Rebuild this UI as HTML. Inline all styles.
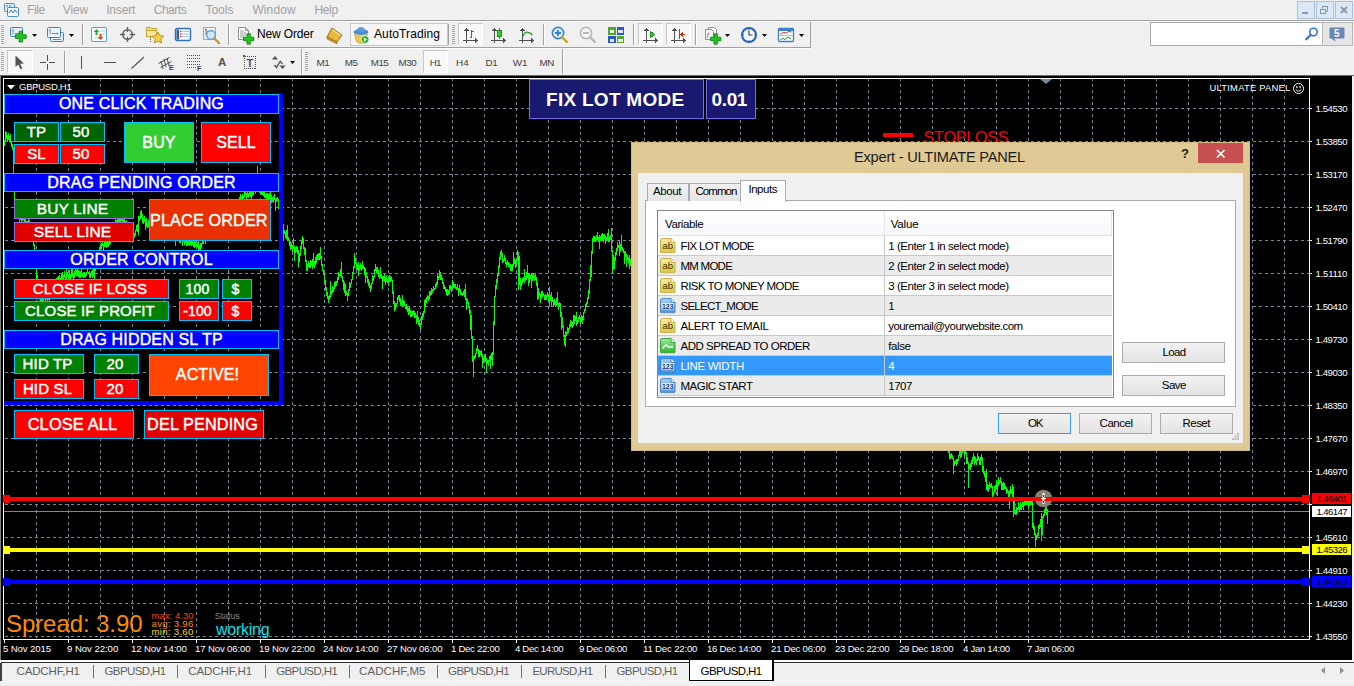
<!DOCTYPE html>
<html><head><meta charset="utf-8"><title>MT4</title>
<style>
html,body{margin:0;padding:0;}
body{width:1354px;height:686px;overflow:hidden;background:#f0f0f0;font-family:"Liberation Sans",sans-serif;position:relative;}
.a{position:absolute;box-sizing:content-box;white-space:nowrap;overflow:hidden;}
.t{overflow:visible;line-height:1;}
svg{position:absolute;left:0;top:0;overflow:visible;}
</style></head><body>

<div class="a" style="left:0;top:75px;width:1354px;height:585px;background:#000;"></div>
<div class="a" style="left:0;top:75px;width:1354px;height:1px;background:#696969;"></div>
<div class="a" style="left:0;top:76px;width:1px;height:584px;background:#808080;"></div>
<svg width="1354" height="686" viewBox="0 0 1354 686" shape-rendering="crispEdges">
<line x1="36.5" y1="78" x2="36.5" y2="638" stroke="#778899" stroke-width="1" stroke-dasharray="3 3"/>
<line x1="68.5" y1="78" x2="68.5" y2="638" stroke="#778899" stroke-width="1" stroke-dasharray="3 3"/>
<line x1="100.5" y1="78" x2="100.5" y2="638" stroke="#778899" stroke-width="1" stroke-dasharray="3 3"/>
<line x1="132.5" y1="78" x2="132.5" y2="638" stroke="#778899" stroke-width="1" stroke-dasharray="3 3"/>
<line x1="164.5" y1="78" x2="164.5" y2="638" stroke="#778899" stroke-width="1" stroke-dasharray="3 3"/>
<line x1="196.5" y1="78" x2="196.5" y2="638" stroke="#778899" stroke-width="1" stroke-dasharray="3 3"/>
<line x1="228.5" y1="78" x2="228.5" y2="638" stroke="#778899" stroke-width="1" stroke-dasharray="3 3"/>
<line x1="260.5" y1="78" x2="260.5" y2="638" stroke="#778899" stroke-width="1" stroke-dasharray="3 3"/>
<line x1="292.5" y1="78" x2="292.5" y2="638" stroke="#778899" stroke-width="1" stroke-dasharray="3 3"/>
<line x1="324.5" y1="78" x2="324.5" y2="638" stroke="#778899" stroke-width="1" stroke-dasharray="3 3"/>
<line x1="356.5" y1="78" x2="356.5" y2="638" stroke="#778899" stroke-width="1" stroke-dasharray="3 3"/>
<line x1="388.5" y1="78" x2="388.5" y2="638" stroke="#778899" stroke-width="1" stroke-dasharray="3 3"/>
<line x1="420.5" y1="78" x2="420.5" y2="638" stroke="#778899" stroke-width="1" stroke-dasharray="3 3"/>
<line x1="452.5" y1="78" x2="452.5" y2="638" stroke="#778899" stroke-width="1" stroke-dasharray="3 3"/>
<line x1="484.5" y1="78" x2="484.5" y2="638" stroke="#778899" stroke-width="1" stroke-dasharray="3 3"/>
<line x1="516.5" y1="78" x2="516.5" y2="638" stroke="#778899" stroke-width="1" stroke-dasharray="3 3"/>
<line x1="548.5" y1="78" x2="548.5" y2="638" stroke="#778899" stroke-width="1" stroke-dasharray="3 3"/>
<line x1="580.5" y1="78" x2="580.5" y2="638" stroke="#778899" stroke-width="1" stroke-dasharray="3 3"/>
<line x1="612.5" y1="78" x2="612.5" y2="638" stroke="#778899" stroke-width="1" stroke-dasharray="3 3"/>
<line x1="644.5" y1="78" x2="644.5" y2="638" stroke="#778899" stroke-width="1" stroke-dasharray="3 3"/>
<line x1="676.5" y1="78" x2="676.5" y2="638" stroke="#778899" stroke-width="1" stroke-dasharray="3 3"/>
<line x1="708.5" y1="78" x2="708.5" y2="638" stroke="#778899" stroke-width="1" stroke-dasharray="3 3"/>
<line x1="740.5" y1="78" x2="740.5" y2="638" stroke="#778899" stroke-width="1" stroke-dasharray="3 3"/>
<line x1="772.5" y1="78" x2="772.5" y2="638" stroke="#778899" stroke-width="1" stroke-dasharray="3 3"/>
<line x1="804.5" y1="78" x2="804.5" y2="638" stroke="#778899" stroke-width="1" stroke-dasharray="3 3"/>
<line x1="836.5" y1="78" x2="836.5" y2="638" stroke="#778899" stroke-width="1" stroke-dasharray="3 3"/>
<line x1="868.5" y1="78" x2="868.5" y2="638" stroke="#778899" stroke-width="1" stroke-dasharray="3 3"/>
<line x1="900.5" y1="78" x2="900.5" y2="638" stroke="#778899" stroke-width="1" stroke-dasharray="3 3"/>
<line x1="932.5" y1="78" x2="932.5" y2="638" stroke="#778899" stroke-width="1" stroke-dasharray="3 3"/>
<line x1="964.5" y1="78" x2="964.5" y2="638" stroke="#778899" stroke-width="1" stroke-dasharray="3 3"/>
<line x1="996.5" y1="78" x2="996.5" y2="638" stroke="#778899" stroke-width="1" stroke-dasharray="3 3"/>
<line x1="1028.5" y1="78" x2="1028.5" y2="638" stroke="#778899" stroke-width="1" stroke-dasharray="3 3"/>
<line x1="1060.5" y1="78" x2="1060.5" y2="638" stroke="#778899" stroke-width="1" stroke-dasharray="3 3"/>
<line x1="1092.5" y1="78" x2="1092.5" y2="638" stroke="#778899" stroke-width="1" stroke-dasharray="3 3"/>
<line x1="1124.5" y1="78" x2="1124.5" y2="638" stroke="#778899" stroke-width="1" stroke-dasharray="3 3"/>
<line x1="1156.5" y1="78" x2="1156.5" y2="638" stroke="#778899" stroke-width="1" stroke-dasharray="3 3"/>
<line x1="1188.5" y1="78" x2="1188.5" y2="638" stroke="#778899" stroke-width="1" stroke-dasharray="3 3"/>
<line x1="1220.5" y1="78" x2="1220.5" y2="638" stroke="#778899" stroke-width="1" stroke-dasharray="3 3"/>
<line x1="1252.5" y1="78" x2="1252.5" y2="638" stroke="#778899" stroke-width="1" stroke-dasharray="3 3"/>
<line x1="1284.5" y1="78" x2="1284.5" y2="638" stroke="#778899" stroke-width="1" stroke-dasharray="3 3"/>
<line x1="5" y1="108.5" x2="1309" y2="108.5" stroke="#778899" stroke-width="1" stroke-dasharray="3 3"/>
<line x1="5" y1="141.5" x2="1309" y2="141.5" stroke="#778899" stroke-width="1" stroke-dasharray="3 3"/>
<line x1="5" y1="174.5" x2="1309" y2="174.5" stroke="#778899" stroke-width="1" stroke-dasharray="3 3"/>
<line x1="5" y1="207.5" x2="1309" y2="207.5" stroke="#778899" stroke-width="1" stroke-dasharray="3 3"/>
<line x1="5" y1="240.5" x2="1309" y2="240.5" stroke="#778899" stroke-width="1" stroke-dasharray="3 3"/>
<line x1="5" y1="273.5" x2="1309" y2="273.5" stroke="#778899" stroke-width="1" stroke-dasharray="3 3"/>
<line x1="5" y1="306.5" x2="1309" y2="306.5" stroke="#778899" stroke-width="1" stroke-dasharray="3 3"/>
<line x1="5" y1="339.5" x2="1309" y2="339.5" stroke="#778899" stroke-width="1" stroke-dasharray="3 3"/>
<line x1="5" y1="372.5" x2="1309" y2="372.5" stroke="#778899" stroke-width="1" stroke-dasharray="3 3"/>
<line x1="5" y1="405.5" x2="1309" y2="405.5" stroke="#778899" stroke-width="1" stroke-dasharray="3 3"/>
<line x1="5" y1="438.5" x2="1309" y2="438.5" stroke="#778899" stroke-width="1" stroke-dasharray="3 3"/>
<line x1="5" y1="471.5" x2="1309" y2="471.5" stroke="#778899" stroke-width="1" stroke-dasharray="3 3"/>
<line x1="5" y1="504.5" x2="1309" y2="504.5" stroke="#778899" stroke-width="1" stroke-dasharray="3 3"/>
<line x1="5" y1="537.5" x2="1309" y2="537.5" stroke="#778899" stroke-width="1" stroke-dasharray="3 3"/>
<line x1="5" y1="570.5" x2="1309" y2="570.5" stroke="#778899" stroke-width="1" stroke-dasharray="3 3"/>
<line x1="5" y1="603.5" x2="1309" y2="603.5" stroke="#778899" stroke-width="1" stroke-dasharray="3 3"/>
<line x1="5" y1="636.5" x2="1309" y2="636.5" stroke="#778899" stroke-width="1" stroke-dasharray="3 3"/>
<path d="M3.5 639.5V78.5H1309.5V639.5" fill="none" stroke="#fff"/>
<path d="M3.5 639.5H1309.5" fill="none" stroke="#fff"/>
<path d="M4.5 140V146M5.5 131V142M6.5 132V139M7.5 135V142M8.5 133V140M9.5 136V142M10.5 134V143M11.5 142V147M12.5 144V150M13.5 147V176M14.5 174V209M15.5 200V209M16.5 204V210M17.5 206V211M18.5 209V217M19.5 211V224M20.5 213V220M21.5 216V223M22.5 216V221M23.5 217V220M24.5 218V222M25.5 217V225M26.5 221V226M27.5 221V226M28.5 218V223M29.5 220V226M30.5 224V232M31.5 229V237M32.5 235V242M33.5 230V246M34.5 244V254M35.5 253V268M36.5 266V279M37.5 275V286M38.5 282V295M39.5 288V295M40.5 292V306M41.5 296V301M42.5 297V304M43.5 295V303M44.5 293V299M45.5 295V302M46.5 294V300M47.5 295V303M48.5 294V300M49.5 296V304M50.5 294V299M51.5 293V299M52.5 288V295M53.5 287V293M54.5 281V290M55.5 283V288M56.5 278V285M57.5 277V284M58.5 276V282M59.5 275V282M60.5 278V283M61.5 274V280M62.5 272V279M63.5 275V280M64.5 271V278M65.5 276V281M66.5 265V279M67.5 272V277M68.5 274V283M69.5 270V279M70.5 274V280M71.5 264V278M72.5 269V277M73.5 273V281M74.5 271V278M75.5 267V275M76.5 270V276M77.5 264V276M78.5 270V277M79.5 271V278M80.5 271V278M81.5 268V277M82.5 273V277M83.5 272V278M84.5 272V277M85.5 273V278M86.5 272V276M87.5 269V273M88.5 272V274M89.5 271V278M90.5 273V278M91.5 271V276M92.5 270V278M93.5 269V277M94.5 268V280M95.5 263V271M96.5 250V265M97.5 255V262M98.5 252V258M99.5 247V255M100.5 244V252M101.5 243V249M102.5 242V246M103.5 244V250M104.5 239V247M105.5 240V247M106.5 242V248M107.5 239V247M108.5 240V247M109.5 242V245M110.5 240V244M111.5 233V242M112.5 231V238M113.5 230V236M114.5 222V233M115.5 219V224M116.5 220V228M117.5 212V227M118.5 209V225M119.5 218V223M120.5 216V222M121.5 217V221M122.5 214V223M123.5 218V222M124.5 218V226M125.5 221V226M126.5 220V226M127.5 225V231M128.5 224V237M129.5 227V240M130.5 229V238M131.5 229V234M132.5 231V239M133.5 229V235M134.5 233V238M135.5 230V236M136.5 225V231M137.5 224V232M138.5 216V235M139.5 216V221M140.5 211V219M141.5 210V218M142.5 214V223M143.5 218V224M144.5 216V222M145.5 219V230M146.5 218V227M147.5 222V228M148.5 220V227M149.5 224V227M150.5 221V227M151.5 225V230M152.5 228V239M153.5 222V231M154.5 224V232M155.5 228V234M156.5 227V232M157.5 229V234M158.5 230V235M159.5 231V237M160.5 230V235M161.5 232V235M162.5 229V233M163.5 230V237M164.5 230V236M165.5 231V238M166.5 228V234M167.5 232V238M168.5 234V239M169.5 234V240M170.5 231V238M171.5 232V236M172.5 233V240M173.5 232V240M174.5 236V240M175.5 233V246M176.5 237V241M177.5 237V240M178.5 238V241M179.5 236V243M180.5 236V243M181.5 225V240M182.5 238V246M183.5 235V242M184.5 238V245M185.5 237V243M186.5 241V246M187.5 241V246M188.5 239V245M189.5 238V246M190.5 240V245M191.5 240V246M192.5 237V245M193.5 242V247M194.5 235V248M195.5 240V247M196.5 244V247M197.5 242V247M198.5 236V250M199.5 245V251M200.5 243V250M201.5 243V248M202.5 237V244M203.5 240V244M204.5 229V241M205.5 236V244M206.5 231V240M207.5 232V239M208.5 232V238M209.5 230V237M210.5 231V236M211.5 229V240M212.5 224V232M213.5 220V229M214.5 222V226M215.5 220V226M216.5 221V224M217.5 214V226M218.5 218V224M219.5 215V221M220.5 210V222M221.5 215V220M222.5 217V231M223.5 214V219M224.5 211V218M225.5 212V215M226.5 211V217M227.5 211V216M228.5 205V213M229.5 207V215M230.5 206V212M231.5 204V211M232.5 206V212M233.5 201V208M234.5 201V206M235.5 200V205M236.5 201V207M237.5 199V204M238.5 201V213M239.5 197V205M240.5 194V201M241.5 196V199M242.5 194V201M243.5 196V200M244.5 192V198M245.5 184V195M246.5 193V200M247.5 190V197M248.5 193V198M249.5 188V196M250.5 191V197M251.5 188V199M252.5 191V196M253.5 188V195M254.5 188V192M255.5 190V194M256.5 185V192M257.5 166V192M258.5 186V191M259.5 184V193M260.5 187V194M261.5 189V195M262.5 191V195M263.5 190V196M264.5 190V198M265.5 194V198M266.5 193V201M267.5 193V199M268.5 194V201M269.5 193V199M270.5 192V199M271.5 195V203M272.5 197V202M273.5 196V203M274.5 194V200M275.5 198V211M276.5 198V202M277.5 197V201M278.5 199V209M279.5 205V212M280.5 208V220M281.5 216V225M282.5 220V226M283.5 224V241M284.5 230V234M285.5 232V238M286.5 230V239M287.5 225V241M288.5 237V241M289.5 239V246M290.5 241V250M291.5 243V249M292.5 245V252M293.5 238V249M294.5 246V261M295.5 247V253M296.5 246V252M297.5 247V254M298.5 250V267M299.5 253V262M300.5 246V256M301.5 240V249M302.5 236V244M303.5 238V249M304.5 247V255M305.5 248V262M306.5 260V271M307.5 264V271M308.5 261V267M309.5 263V268M310.5 260V268M311.5 261V266M312.5 259V269M313.5 253V267M314.5 261V268M315.5 257V265M316.5 255V263M317.5 254V260M318.5 253V260M319.5 253V260M320.5 247V259M321.5 256V266M322.5 264V271M323.5 270V275M324.5 273V283M325.5 280V290M326.5 287V296M327.5 292V299M328.5 296V303M329.5 295V300M330.5 281V298M331.5 290V295M332.5 286V293M333.5 287V292M334.5 282V289M335.5 281V287M336.5 281V286M337.5 277V283M338.5 272V280M339.5 274V277M340.5 269V276M341.5 262V278M342.5 276V282M343.5 280V290M344.5 282V293M345.5 284V296M346.5 291V295M347.5 293V301M348.5 289V296M349.5 282V291M350.5 283V288M351.5 279V284M352.5 272V280M353.5 266V274M354.5 253V268M355.5 258V264M356.5 262V270M357.5 264V270M358.5 262V276M359.5 265V271M360.5 263V269M361.5 265V271M362.5 261V269M363.5 265V269M364.5 267V275M365.5 268V283M366.5 272V278M367.5 276V283M368.5 279V286M369.5 282V288M370.5 285V292M371.5 283V289M372.5 275V284M373.5 276V281M374.5 269V277M375.5 264V271M376.5 267V273M377.5 267V273M378.5 270V277M379.5 273V279M380.5 267V278M381.5 274V279M382.5 276V289M383.5 276V281M384.5 274V282M385.5 277V285M386.5 275V282M387.5 279V283M388.5 278V286M389.5 275V282M390.5 276V282M391.5 277V281M392.5 280V294M393.5 291V304M394.5 301V311M395.5 303V310M396.5 303V307M397.5 297V304M398.5 295V300M399.5 295V302M400.5 298V306M401.5 300V305M402.5 295V307M403.5 300V306M404.5 301V306M405.5 305V309M406.5 304V310M407.5 306V312M408.5 308V315M409.5 306V314M410.5 310V317M411.5 311V317M412.5 311V316M413.5 310V315M414.5 311V318M415.5 313V318M416.5 315V324M417.5 311V322M418.5 317V325M419.5 320V327M420.5 323V330M421.5 316V325M422.5 313V320M423.5 311V317M424.5 300V313M425.5 299V307M426.5 297V303M427.5 295V300M428.5 296V301M429.5 291V299M430.5 291V296M431.5 288V295M432.5 289V293M433.5 286V291M434.5 288V290M435.5 284V289M436.5 282V287M437.5 274V285M438.5 276V280M439.5 270V278M440.5 272V280M441.5 275V280M442.5 278V284M443.5 282V289M444.5 285V289M445.5 287V292M446.5 289V295M447.5 289V296M448.5 290V295M449.5 285V294M450.5 285V290M451.5 286V292M452.5 280V289M453.5 282V288M454.5 284V288M455.5 284V289M456.5 287V290M457.5 284V290M458.5 288V296M459.5 285V292M460.5 289V295M461.5 292V295M462.5 293V296M463.5 291V295M464.5 289V297M465.5 284V300M466.5 298V310M467.5 299V304M468.5 302V308M469.5 306V314M470.5 310V330M471.5 315V339M472.5 336V362M473.5 356V377M474.5 355V359M475.5 353V358M476.5 348V354M477.5 345V351M478.5 349V357M479.5 350V357M480.5 351V355M481.5 350V357M482.5 354V368M483.5 357V363M484.5 355V360M485.5 354V362M486.5 358V373M487.5 360V364M488.5 360V366M489.5 356V362M490.5 355V369M491.5 353V360M492.5 352V366M493.5 321V355M494.5 296V325M495.5 285V297M496.5 279V289M497.5 273V283M498.5 265V276M499.5 257V268M500.5 251V260M501.5 250V257M502.5 253V263M503.5 259V262M504.5 255V261M505.5 258V264M506.5 262V267M507.5 260V265M508.5 262V267M509.5 263V267M510.5 264V271M511.5 265V271M512.5 264V271M513.5 252V267M514.5 258V264M515.5 260V268M516.5 259V265M517.5 250V261M518.5 252V290M519.5 256V285M520.5 278V290M521.5 281V286M522.5 278V284M523.5 277V282M524.5 269V283M525.5 276V281M526.5 272V280M527.5 265V278M528.5 273V286M529.5 274V283M530.5 275V279M531.5 273V288M532.5 273V281M533.5 273V279M534.5 275V281M535.5 274V280M536.5 277V286M537.5 282V300M538.5 288V299M539.5 292V296M540.5 294V303M541.5 291V299M542.5 291V297M543.5 293V296M544.5 295V300M545.5 294V300M546.5 295V300M547.5 292V297M548.5 294V301M549.5 287V307M550.5 295V301M551.5 292V307M552.5 297V302M553.5 300V306M554.5 299V305M555.5 301V307M556.5 298V306M557.5 292V305M558.5 303V310M559.5 302V306M560.5 303V317M561.5 312V330M562.5 317V328M563.5 325V337M564.5 335V345M565.5 331V347M566.5 332V336M567.5 327V334M568.5 328V333M569.5 324V330M570.5 320V327M571.5 321V327M572.5 322V328M573.5 315V326M574.5 315V324M575.5 316V321M576.5 312V326M577.5 320V324M578.5 317V322M579.5 315V319M580.5 317V324M581.5 315V322M582.5 316V324M583.5 312V320M584.5 309V313M585.5 304V311M586.5 302V307M587.5 297V304M588.5 290V299M589.5 279V294M590.5 265V281M591.5 251V277M592.5 238V254M593.5 236V242M594.5 236V242M595.5 237V242M596.5 235V241M597.5 232V240M598.5 237V242M599.5 235V249M600.5 236V241M601.5 234V240M602.5 233V241M603.5 234V242M604.5 234V239M605.5 236V244M606.5 237V241M607.5 233V240M608.5 229V242M609.5 237V242M610.5 235V240M611.5 228V252M612.5 250V274M613.5 255V270M614.5 257V269M615.5 252V261M616.5 248V255M617.5 242V251M618.5 245V248M619.5 241V256M620.5 244V252M621.5 235V250M622.5 247V251M623.5 249V253M624.5 251V264M625.5 251V257M626.5 254V267M627.5 255V260M628.5 257V263M629.5 255V269M630.5 259V266M631.5 256V263M632.5 260V265M633.5 257V263M634.5 261V268M635.5 255V277M636.5 262V267M637.5 260V266M638.5 257V271M639.5 263V268M640.5 264V269M945.5 440V449M946.5 441V448M947.5 444V451M948.5 447V453M949.5 449V459M950.5 454V459M951.5 453V458M952.5 455V459M953.5 458V474M954.5 461V466M955.5 460V464M956.5 459V466M957.5 459V464M958.5 455V461M959.5 450V456M960.5 441V458M961.5 450V457M962.5 448V453M963.5 447V452M964.5 449V456M965.5 448V454M966.5 452V464M967.5 457V464M968.5 462V488M969.5 464V469M970.5 463V470M971.5 460V467M972.5 457V464M973.5 453V461M974.5 456V465M975.5 457V463M976.5 459V465M977.5 453V461M978.5 456V460M979.5 458V465M980.5 457V465M981.5 454V461M982.5 457V472M983.5 466V474M984.5 471V477M985.5 473V482M986.5 469V490M987.5 484V491M988.5 485V492M989.5 482V489M990.5 484V487M991.5 483V488M992.5 486V498M993.5 492V496M994.5 486V493M995.5 485V492M996.5 480V489M997.5 482V496M998.5 477V486M999.5 480V484M1000.5 477V483M1001.5 481V490M1002.5 483V490M1003.5 482V490M1004.5 483V489M1005.5 486V489M1006.5 487V494M1007.5 489V493M1008.5 491V498M1009.5 490V509M1010.5 486V494M1011.5 489V494M1012.5 484V500M1013.5 487V517M1014.5 500V514M1015.5 510V515M1016.5 507V515M1017.5 508V513M1018.5 502V510M1019.5 506V512M1020.5 502V510M1021.5 504V510M1022.5 499V507M1023.5 502V510M1024.5 497V506M1025.5 497V504M1026.5 500V505M1027.5 499V504M1028.5 498V509M1029.5 500V506M1030.5 500V505M1031.5 500V505M1032.5 497V528M1033.5 523V530M1034.5 526V535M1035.5 533V547M1036.5 535V540M1037.5 533V538M1038.5 525V536M1039.5 524V529M1040.5 519V527M1041.5 513V541M1042.5 516V535M1043.5 514V518M1044.5 509V516M1045.5 502V513M1046.5 506V515M1047.5 509V524" stroke="#00ff00" stroke-width="1" fill="none"/>
<line x1="4" y1="511.5" x2="1309" y2="511.5" stroke="#778899"/>
<circle cx="1043.5" cy="498.5" r="8.8" fill="#8a8070" shape-rendering="auto"/>
</svg>
<div class="a" style="left:4px;top:497px;width:1306px;height:4px;background:#ff0000;"></div>
<div class="a" style="left:3px;top:495px;width:7px;height:8px;background:#ff0000;"></div>
<div class="a" style="left:1302px;top:495px;width:8px;height:8px;background:#ff0000;"></div>
<div class="a" style="left:4px;top:548px;width:1306px;height:4px;background:#ffff00;"></div>
<div class="a" style="left:3px;top:546px;width:7px;height:8px;background:#ffff00;"></div>
<div class="a" style="left:1302px;top:546px;width:8px;height:8px;background:#ffff00;"></div>
<div class="a" style="left:4px;top:580px;width:1306px;height:4px;background:#0000ff;"></div>
<div class="a" style="left:3px;top:578px;width:7px;height:8px;background:#0000ff;"></div>
<div class="a" style="left:1302px;top:578px;width:8px;height:8px;background:#0000ff;"></div>
<div class="a" style="left:1310px;top:108px;width:2px;height:1px;background:#fff;"></div>
<div class="a t" style="left:1315.6px;top:103.5px;font-size:9.6px;color:#fff;letter-spacing:-0.458px;">1.54530</div>
<div class="a" style="left:1310px;top:141px;width:2px;height:1px;background:#fff;"></div>
<div class="a t" style="left:1315.6px;top:136.5px;font-size:9.6px;color:#fff;letter-spacing:-0.458px;">1.53850</div>
<div class="a" style="left:1310px;top:174px;width:2px;height:1px;background:#fff;"></div>
<div class="a t" style="left:1315.6px;top:169.5px;font-size:9.6px;color:#fff;letter-spacing:-0.458px;">1.53170</div>
<div class="a" style="left:1310px;top:207px;width:2px;height:1px;background:#fff;"></div>
<div class="a t" style="left:1315.6px;top:202.5px;font-size:9.6px;color:#fff;letter-spacing:-0.458px;">1.52470</div>
<div class="a" style="left:1310px;top:240px;width:2px;height:1px;background:#fff;"></div>
<div class="a t" style="left:1315.6px;top:235.5px;font-size:9.6px;color:#fff;letter-spacing:-0.458px;">1.51790</div>
<div class="a" style="left:1310px;top:273px;width:2px;height:1px;background:#fff;"></div>
<div class="a t" style="left:1315.6px;top:268.5px;font-size:9.6px;color:#fff;letter-spacing:-0.254px;">1.51110</div>
<div class="a" style="left:1310px;top:306px;width:2px;height:1px;background:#fff;"></div>
<div class="a t" style="left:1315.6px;top:301.5px;font-size:9.6px;color:#fff;letter-spacing:-0.458px;">1.50410</div>
<div class="a" style="left:1310px;top:339px;width:2px;height:1px;background:#fff;"></div>
<div class="a t" style="left:1315.6px;top:334.5px;font-size:9.6px;color:#fff;letter-spacing:-0.458px;">1.49730</div>
<div class="a" style="left:1310px;top:372px;width:2px;height:1px;background:#fff;"></div>
<div class="a t" style="left:1315.6px;top:367.5px;font-size:9.6px;color:#fff;letter-spacing:-0.458px;">1.49030</div>
<div class="a" style="left:1310px;top:405px;width:2px;height:1px;background:#fff;"></div>
<div class="a t" style="left:1315.6px;top:400.5px;font-size:9.6px;color:#fff;letter-spacing:-0.458px;">1.48350</div>
<div class="a" style="left:1310px;top:438px;width:2px;height:1px;background:#fff;"></div>
<div class="a t" style="left:1315.6px;top:433.5px;font-size:9.6px;color:#fff;letter-spacing:-0.458px;">1.47670</div>
<div class="a" style="left:1310px;top:471px;width:2px;height:1px;background:#fff;"></div>
<div class="a t" style="left:1315.6px;top:466.5px;font-size:9.6px;color:#fff;letter-spacing:-0.458px;">1.46970</div>
<div class="a" style="left:1310px;top:504px;width:2px;height:1px;background:#fff;"></div>
<div class="a" style="left:1310px;top:537px;width:2px;height:1px;background:#fff;"></div>
<div class="a t" style="left:1315.6px;top:532.5px;font-size:9.6px;color:#fff;letter-spacing:-0.458px;">1.45610</div>
<div class="a" style="left:1310px;top:570px;width:2px;height:1px;background:#fff;"></div>
<div class="a t" style="left:1315.6px;top:565.5px;font-size:9.6px;color:#fff;letter-spacing:-0.458px;">1.44910</div>
<div class="a" style="left:1310px;top:603px;width:2px;height:1px;background:#fff;"></div>
<div class="a t" style="left:1315.6px;top:598.5px;font-size:9.6px;color:#fff;letter-spacing:-0.458px;">1.44230</div>
<div class="a" style="left:1310px;top:636px;width:2px;height:1px;background:#fff;"></div>
<div class="a t" style="left:1315.6px;top:631.5px;font-size:9.6px;color:#fff;letter-spacing:-0.458px;">1.43550</div>
<div class="a" style="left:1312px;top:493px;width:39px;height:11px;background:#ff0000;"></div>
<div class="a t" style="left:1316.4px;top:494px;font-size:9.6px;color:#000;letter-spacing:-0.600px;">1.46401</div>
<div class="a" style="left:1312px;top:506px;width:39px;height:11px;background:#ffffff;"></div>
<div class="a t" style="left:1316.4px;top:507px;font-size:9.6px;color:#000;letter-spacing:-0.600px;">1.46147</div>
<div class="a" style="left:1312px;top:544px;width:39px;height:11px;background:#ffff00;"></div>
<div class="a t" style="left:1316.4px;top:545px;font-size:9.6px;color:#000;letter-spacing:-0.600px;">1.45326</div>
<div class="a" style="left:1312px;top:576px;width:39px;height:11px;background:#0000ff;"></div>
<div class="a t" style="left:1316.4px;top:577px;font-size:9.6px;color:#000;letter-spacing:-0.600px;">1.44663</div>
<div class="a" style="left:4px;top:640px;width:1px;height:3px;background:#fff;"></div>
<div class="a t" style="left:3px;top:644px;font-size:9.6px;color:#fff;letter-spacing:-0.110px;">5 Nov 2015</div>
<div class="a" style="left:68px;top:640px;width:1px;height:3px;background:#fff;"></div>
<div class="a t" style="left:67px;top:644px;font-size:9.6px;color:#fff;letter-spacing:-0.052px;">9 Nov 22:00</div>
<div class="a" style="left:132px;top:640px;width:1px;height:3px;background:#fff;"></div>
<div class="a t" style="left:131px;top:644px;font-size:9.6px;color:#fff;letter-spacing:-0.117px;">12 Nov 14:00</div>
<div class="a" style="left:196px;top:640px;width:1px;height:3px;background:#fff;"></div>
<div class="a t" style="left:195px;top:644px;font-size:9.6px;color:#fff;letter-spacing:-0.142px;">17 Nov 06:00</div>
<div class="a" style="left:260px;top:640px;width:1px;height:3px;background:#fff;"></div>
<div class="a t" style="left:259px;top:644px;font-size:9.6px;color:#fff;letter-spacing:-0.117px;">19 Nov 22:00</div>
<div class="a" style="left:324px;top:640px;width:1px;height:3px;background:#fff;"></div>
<div class="a t" style="left:323px;top:644px;font-size:9.6px;color:#fff;letter-spacing:-0.142px;">24 Nov 14:00</div>
<div class="a" style="left:388px;top:640px;width:1px;height:3px;background:#fff;"></div>
<div class="a t" style="left:387px;top:644px;font-size:9.6px;color:#fff;letter-spacing:-0.142px;">27 Nov 06:00</div>
<div class="a" style="left:452px;top:640px;width:1px;height:3px;background:#fff;"></div>
<div class="a t" style="left:451px;top:644px;font-size:9.6px;color:#fff;letter-spacing:-0.288px;">1 Dec 22:00</div>
<div class="a" style="left:516px;top:640px;width:1px;height:3px;background:#fff;"></div>
<div class="a t" style="left:515px;top:644px;font-size:9.6px;color:#fff;letter-spacing:-0.315px;">4 Dec 14:00</div>
<div class="a" style="left:580px;top:640px;width:1px;height:3px;background:#fff;"></div>
<div class="a t" style="left:579px;top:644px;font-size:9.6px;color:#fff;letter-spacing:-0.343px;">9 Dec 06:00</div>
<div class="a" style="left:644px;top:640px;width:1px;height:3px;background:#fff;"></div>
<div class="a t" style="left:643px;top:644px;font-size:9.6px;color:#fff;letter-spacing:-0.175px;">11 Dec 22:00</div>
<div class="a" style="left:708px;top:640px;width:1px;height:3px;background:#fff;"></div>
<div class="a t" style="left:707px;top:644px;font-size:9.6px;color:#fff;letter-spacing:-0.259px;">16 Dec 14:00</div>
<div class="a" style="left:772px;top:640px;width:1px;height:3px;background:#fff;"></div>
<div class="a t" style="left:771px;top:644px;font-size:9.6px;color:#fff;letter-spacing:-0.209px;">21 Dec 06:00</div>
<div class="a" style="left:836px;top:640px;width:1px;height:3px;background:#fff;"></div>
<div class="a t" style="left:835px;top:644px;font-size:9.6px;color:#fff;letter-spacing:-0.234px;">23 Dec 22:00</div>
<div class="a" style="left:900px;top:640px;width:1px;height:3px;background:#fff;"></div>
<div class="a t" style="left:899px;top:644px;font-size:9.6px;color:#fff;letter-spacing:-0.234px;">29 Dec 18:00</div>
<div class="a" style="left:964px;top:640px;width:1px;height:3px;background:#fff;"></div>
<div class="a t" style="left:963px;top:644px;font-size:9.6px;color:#fff;letter-spacing:-0.298px;">4 Jan 14:00</div>
<div class="a" style="left:1028px;top:640px;width:1px;height:3px;background:#fff;"></div>
<div class="a t" style="left:1027px;top:644px;font-size:9.6px;color:#fff;letter-spacing:-0.271px;">7 Jan 06:00</div>
<svg width="20" height="10" style="left:7px;top:85px"><path d="M0 0H8L4 4.500Z" fill="#fff"/></svg>
<div class="a t" style="left:19px;top:82.2px;font-size:9.6px;color:#fff;letter-spacing:-0.331px;">GBPUSD,H1</div>
<div class="a t" style="left:1209.6px;top:82.8px;font-size:9.4px;color:#fff;letter-spacing:0.227px;">ULTIMATE PANEL</div>
<svg width="13" height="13" style="left:1292px;top:82px" shape-rendering="auto"><circle cx="6.500" cy="6.500" r="5" fill="none" stroke="#fff"/><rect x="4.300" y="4" width="1.200" height="2.200" fill="#fff"/><rect x="7.500" y="4" width="1.200" height="2.200" fill="#fff"/><path d="M3.800 7.500Q6.500 10.800 9.200 7.500" stroke="#fff" fill="none"/></svg>
<svg width="14" height="8" style="left:1040px;top:79px"><path d="M0 0H12L6 5Z" fill="#778899"/></svg>
<div class="a" style="left:883px;top:133px;width:30px;height:4px;background:#ff0000;"></div>
<div class="a t" style="left:923.6px;top:130px;font-size:16px;color:#ff0000;letter-spacing:-0.158px;">STOPLOSS</div>
<div class="a t" style="left:6px;top:612px;font-size:24px;color:#ff8c00;letter-spacing:-0.078px;">Spread: 3.90</div>
<div class="a t" style="left:151.6px;top:611px;font-size:9.6px;color:#ff4500;letter-spacing:-0.017px;">max: 4.30</div>
<div class="a t" style="left:151.6px;top:619px;font-size:9.6px;color:#ff8c00;letter-spacing:0.278px;">avg: 3.96</div>
<div class="a t" style="left:151.6px;top:627px;font-size:9.6px;color:#ffd700;letter-spacing:0.279px;">min: 3.60</div>
<div class="a t" style="left:214.8px;top:611.6px;font-size:9.2px;color:#808080;letter-spacing:-0.180px;">Status</div>
<div class="a t" style="left:215.9px;top:622px;font-size:16px;color:#00e5ee;letter-spacing:-0.234px;">working</div>
<svg width="8" height="14" style="left:1040px;top:492px"><path d="M3.500 1v11" stroke="#fff" stroke-width="2"/><path d="M3.500 3v2M3.500 9v2" stroke="#2020ff" stroke-width="1"/><path d="M1 6.500h5" stroke="#fff"/></svg>
<div class="a" style="left:1352px;top:76px;width:2px;height:584px;background:#f0f0f0;"></div>
<div class="a" style="left:279px;top:93px;width:4px;height:312px;background:#0000ff;"></div>
<div class="a" style="left:4px;top:401px;width:279px;height:4px;background:#0000ff;"></div>
<div class="a" style="left:4px;top:94px;width:273px;height:18px;background:#0000ff;border:1px solid #00bfff;font-size:16px;line-height:18px;color:#fff;text-align:center;-webkit-text-stroke:0.45px #fff;letter-spacing:0.15px;">ONE CLICK TRADING</div>
<div class="a" style="left:4px;top:173px;width:273px;height:17px;background:#0000ff;border:1px solid #00bfff;font-size:16px;line-height:17px;color:#fff;text-align:center;-webkit-text-stroke:0.45px #fff;letter-spacing:0.15px;">DRAG PENDING ORDER</div>
<div class="a" style="left:4px;top:250px;width:273px;height:17px;background:#0000ff;border:1px solid #00bfff;font-size:16px;line-height:17px;color:#fff;text-align:center;-webkit-text-stroke:0.45px #fff;letter-spacing:0.15px;">ORDER CONTROL</div>
<div class="a" style="left:4px;top:330px;width:273px;height:17px;background:#0000ff;border:1px solid #00bfff;font-size:16px;line-height:17px;color:#fff;text-align:center;-webkit-text-stroke:0.45px #fff;letter-spacing:0.15px;">DRAG HIDDEN SL TP</div>
<div class="a" style="left:14px;top:122px;width:43px;height:18px;background:#006400;border:1px solid #00bfff;font-size:15px;line-height:18px;color:#fff;text-align:center;-webkit-text-stroke:0.45px #fff;letter-spacing:0.15px;">TP</div>
<div class="a" style="left:60px;top:122px;width:43px;height:18px;background:#006400;border:1px solid #00bfff;font-size:15px;line-height:18px;color:#fff;text-align:center;-webkit-text-stroke:0.45px #fff;letter-spacing:0.15px;padding-right:3px;width:40px;">50</div>
<div class="a" style="left:14px;top:144px;width:43px;height:18px;background:#ff0000;border:1px solid #00bfff;font-size:15px;line-height:18px;color:#fff;text-align:center;-webkit-text-stroke:0.45px #fff;letter-spacing:0.15px;">SL</div>
<div class="a" style="left:60px;top:144px;width:43px;height:18px;background:#ff0000;border:1px solid #00bfff;font-size:15px;line-height:18px;color:#fff;text-align:center;-webkit-text-stroke:0.45px #fff;letter-spacing:0.15px;padding-right:3px;width:40px;">50</div>
<div class="a" style="left:124px;top:122px;width:68px;height:39px;background:#32cd32;border:1px solid #00bfff;font-size:16px;line-height:39px;color:#fff;text-align:center;-webkit-text-stroke:0.45px #fff;letter-spacing:0.15px;">BUY</div>
<div class="a" style="left:201px;top:122px;width:68px;height:39px;background:#ff0000;border:1px solid #00bfff;font-size:16px;line-height:39px;color:#fff;text-align:center;-webkit-text-stroke:0.45px #fff;letter-spacing:0.15px;">SELL</div>
<div class="a" style="left:14px;top:199px;width:118px;height:18px;background:#008000;border:1px solid #9370db;font-size:15.5px;line-height:18px;color:#fff;text-align:center;-webkit-text-stroke:0.45px #fff;letter-spacing:0.15px;padding-right:3px;width:115px;">BUY LINE</div>
<div class="a" style="left:14px;top:222px;width:118px;height:18px;background:#e00000;border:1px solid #9370db;font-size:15.5px;line-height:18px;color:#fff;text-align:center;-webkit-text-stroke:0.45px #fff;letter-spacing:0.15px;padding-right:3px;width:115px;">SELL LINE</div>
<div class="a" style="left:149px;top:199px;width:120px;height:40px;background:#e83000;border:1px solid #00bfff;font-size:16.2px;line-height:40px;color:#fff;text-align:center;-webkit-text-stroke:0.45px #fff;letter-spacing:0.15px;padding-right:3px;width:117px;">PLACE ORDER</div>
<div class="a" style="left:14px;top:279px;width:153px;height:18px;background:#ff0000;border:1px solid #00bfff;font-size:15px;line-height:18px;color:#fff;text-align:center;-webkit-text-stroke:0.45px #fff;letter-spacing:0.15px;padding-right:3px;width:150px;">CLOSE IF LOSS</div>
<div class="a" style="left:14px;top:301px;width:153px;height:18px;background:#008000;border:1px solid #00bfff;font-size:15px;line-height:18px;color:#fff;text-align:center;-webkit-text-stroke:0.45px #fff;letter-spacing:0.15px;padding-right:3px;width:150px;">CLOSE IF PROFIT</div>
<div class="a" style="left:179px;top:279px;width:38px;height:18px;background:#008000;border:1px solid #00bfff;font-size:14px;line-height:18px;color:#fff;text-align:center;-webkit-text-stroke:0.45px #fff;letter-spacing:0.15px;padding-right:3px;width:35px;">100</div>
<div class="a" style="left:222px;top:279px;width:28px;height:18px;background:#008000;border:1px solid #00bfff;font-size:14px;line-height:18px;color:#fff;text-align:center;-webkit-text-stroke:0.45px #fff;letter-spacing:0.15px;padding-right:3px;width:25px;">$</div>
<div class="a" style="left:179px;top:301px;width:38px;height:18px;background:#ff0000;border:1px solid #00bfff;font-size:14px;line-height:18px;color:#fff;text-align:center;-webkit-text-stroke:0.45px #fff;letter-spacing:0.15px;padding-right:3px;width:35px;">-100</div>
<div class="a" style="left:222px;top:301px;width:28px;height:18px;background:#ff0000;border:1px solid #00bfff;font-size:14px;line-height:18px;color:#fff;text-align:center;-webkit-text-stroke:0.45px #fff;letter-spacing:0.15px;padding-right:3px;width:25px;">$</div>
<div class="a" style="left:14px;top:354px;width:68px;height:18px;background:#008000;border:1px solid #00bfff;font-size:15px;line-height:18px;color:#fff;text-align:center;-webkit-text-stroke:0.45px #fff;letter-spacing:0.15px;padding-right:3px;width:65px;">HID TP</div>
<div class="a" style="left:94px;top:354px;width:43px;height:18px;background:#008000;border:1px solid #00bfff;font-size:15px;line-height:18px;color:#fff;text-align:center;-webkit-text-stroke:0.45px #fff;letter-spacing:0.15px;padding-right:3px;width:40px;">20</div>
<div class="a" style="left:14px;top:379px;width:68px;height:18px;background:#ff0000;border:1px solid #00bfff;font-size:15px;line-height:18px;color:#fff;text-align:center;-webkit-text-stroke:0.45px #fff;letter-spacing:0.15px;padding-right:3px;width:65px;">HID SL</div>
<div class="a" style="left:94px;top:379px;width:43px;height:18px;background:#ff0000;border:1px solid #00bfff;font-size:15px;line-height:18px;color:#fff;text-align:center;-webkit-text-stroke:0.45px #fff;letter-spacing:0.15px;padding-right:3px;width:40px;">20</div>
<div class="a" style="left:149px;top:354px;width:118px;height:40px;background:#ff4500;border:1px solid #00bfff;font-size:16px;line-height:40px;color:#fff;text-align:center;-webkit-text-stroke:0.45px #fff;letter-spacing:0.15px;padding-right:3px;width:115px;">ACTIVE!</div>
<div class="a" style="left:14px;top:410px;width:118px;height:27px;background:#ff0000;border:1px solid #00bfff;font-size:16.4px;line-height:27px;color:#fff;text-align:center;-webkit-text-stroke:0.45px #fff;letter-spacing:0.15px;padding-right:3px;width:115px;">CLOSE ALL</div>
<div class="a" style="left:144px;top:410px;width:118px;height:27px;background:#e00000;border:1px solid #00bfff;font-size:16.2px;line-height:27px;color:#fff;text-align:center;-webkit-text-stroke:0.45px #fff;letter-spacing:0.15px;padding-right:3px;width:115px;">DEL PENDING</div>
<div class="a" style="left:529px;top:79px;width:173px;height:38px;background:#191970;border:1px solid #7b68ee;font-size:14px;line-height:38px;color:#fff;text-align:center;"></div>
<div class="a" style="left:706px;top:79px;width:48px;height:38px;background:#191970;border:1px solid #7b68ee;font-size:14px;line-height:38px;color:#fff;text-align:center;"></div>
<div class="a t" style="left:546.1px;top:89.5px;font-size:19px;color:#fff;letter-spacing:0.266px;font-weight:bold;">FIX LOT MODE</div>
<div class="a t" style="left:711.6px;top:89.5px;font-size:19px;color:#fff;letter-spacing:-0.395px;font-weight:bold;">0.01</div>
<div class="a" style="left:631px;top:142px;width:617px;height:307px;background:#dfc994;border:1px solid #d4bb82;"></div>
<div class="a t" style="left:854px;top:150px;font-size:14.6px;color:#1a1a1a;letter-spacing:-0.220px;">Expert - ULTIMATE PANEL</div>
<div class="a t" style="left:1181px;top:147px;font-size:13px;color:#202020;font-weight:bold;">?</div>
<div class="a" style="left:1198px;top:143px;width:45px;height:20px;background:#c75050;"></div>
<svg width="10" height="10" style="left:1216px;top:149px" shape-rendering="auto"><path d="M1 1L8.500 8.500M8.500 1L1 8.500" stroke="#fff" stroke-width="1.700"/></svg>
<div class="a" style="left:638px;top:173px;width:605px;height:270px;background:#f0f0f0;"></div>
<div class="a" style="left:645px;top:200px;width:589px;height:205px;background:#fff;border:1px solid #acacac;"></div>
<div class="a" style="left:647px;top:183px;width:40px;height:17px;border:1px solid #acacac;border-bottom:none;background:linear-gradient(#f2f2f2,#e4e4e4);"></div>
<div class="a" style="left:689px;top:183px;width:50px;height:17px;border:1px solid #acacac;border-bottom:none;background:linear-gradient(#f2f2f2,#e4e4e4);"></div>
<div class="a" style="left:740px;top:180px;width:44px;height:21px;border:1px solid #acacac;border-bottom:none;background:#fff;"></div>
<div class="a t" style="left:653px;top:186.3px;font-size:11.5px;color:#000;letter-spacing:-0.411px;">About</div>
<div class="a t" style="left:695.5px;top:186.3px;font-size:11.5px;color:#000;letter-spacing:-0.942px;">Common</div>
<div class="a t" style="left:748.4px;top:184.3px;font-size:11.5px;color:#000;letter-spacing:-0.455px;">Inputs</div>
<div class="a" style="left:657px;top:210px;width:455px;height:186px;background:#fff;border:1px solid #828790;"></div>
<div class="a" style="left:658px;top:211px;width:454px;height:24px;background:linear-gradient(#fff,#f7f8fa);border-bottom:1px solid #d5e5f5;"></div>
<div class="a" style="left:884px;top:211px;width:1px;height:24px;background:#e3e8ee;"></div>
<div class="a" style="left:1111px;top:211px;width:1px;height:24px;background:#e3e8ee;"></div>
<div class="a t" style="left:665px;top:218.5px;font-size:11.5px;color:#000;letter-spacing:-0.393px;">Variable</div>
<div class="a t" style="left:890.7px;top:218.5px;font-size:11.5px;color:#000;letter-spacing:-0.152px;">Value</div>
<div class="a" style="left:658px;top:236px;width:454px;height:19px;background:#fff;border-bottom:1px solid #c8c8c8;"></div>
<div class="a" style="left:884px;top:236px;width:1px;height:20px;background:#c8c8c8;"></div>
<div class="a t" style="left:680.5px;top:240.7px;font-size:11.5px;color:#000;letter-spacing:-0.628px;">FIX LOT MODE</div>
<div class="a t" style="left:888.2px;top:240.7px;font-size:11.5px;color:#000;letter-spacing:-0.430px;">1 (Enter 1 in select mode)</div>
<svg width="17" height="17" style="left:660px;top:238px" shape-rendering="auto"><defs><linearGradient id="ga0" x1="0" y1="0" x2="0" y2="1"><stop offset="0" stop-color="#f6eea0"/><stop offset="1" stop-color="#d9c545"/></linearGradient></defs><path d="M0.500 2.500q0-2 2-2h8.500l4 4v9.500l-1.500 1-1.500-1-1.500 1-1.500-1-1.500 1-1.500-1-1.500 1-1.500-1-1.500 1-1-0.800z" fill="url(#ga0)" stroke="#bfa838" stroke-width="0.900"/><path d="M11 0.500v4h4" fill="#fbf6c8" stroke="#bfa838" stroke-width="0.800"/><text x="2.500" y="11.300" font-size="9.500" font-family="Liberation Sans" fill="#3a3000">ab</text></svg>
<div class="a" style="left:658px;top:256px;width:454px;height:19px;background:#ebebeb;border-bottom:1px solid #c8c8c8;"></div>
<div class="a" style="left:884px;top:256px;width:1px;height:20px;background:#c8c8c8;"></div>
<div class="a t" style="left:680.5px;top:260.7px;font-size:11.5px;color:#000;letter-spacing:-0.751px;">MM MODE</div>
<div class="a t" style="left:888.2px;top:260.7px;font-size:11.5px;color:#000;letter-spacing:-0.430px;">2 (Enter 2 in select mode)</div>
<svg width="17" height="17" style="left:660px;top:258px" shape-rendering="auto"><defs><linearGradient id="ga1" x1="0" y1="0" x2="0" y2="1"><stop offset="0" stop-color="#f6eea0"/><stop offset="1" stop-color="#d9c545"/></linearGradient></defs><path d="M0.500 2.500q0-2 2-2h8.500l4 4v9.500l-1.500 1-1.500-1-1.500 1-1.500-1-1.500 1-1.500-1-1.500 1-1.500-1-1.500 1-1-0.800z" fill="url(#ga1)" stroke="#bfa838" stroke-width="0.900"/><path d="M11 0.500v4h4" fill="#fbf6c8" stroke="#bfa838" stroke-width="0.800"/><text x="2.500" y="11.300" font-size="9.500" font-family="Liberation Sans" fill="#3a3000">ab</text></svg>
<div class="a" style="left:658px;top:276px;width:454px;height:19px;background:#fff;border-bottom:1px solid #c8c8c8;"></div>
<div class="a" style="left:884px;top:276px;width:1px;height:20px;background:#c8c8c8;"></div>
<div class="a t" style="left:680.5px;top:280.7px;font-size:11.5px;color:#000;letter-spacing:-0.564px;">RISK TO MONEY MODE</div>
<div class="a t" style="left:888.2px;top:280.7px;font-size:11.5px;color:#000;letter-spacing:-0.430px;">3 (Enter 3 in select mode)</div>
<svg width="17" height="17" style="left:660px;top:278px" shape-rendering="auto"><defs><linearGradient id="ga2" x1="0" y1="0" x2="0" y2="1"><stop offset="0" stop-color="#f6eea0"/><stop offset="1" stop-color="#d9c545"/></linearGradient></defs><path d="M0.500 2.500q0-2 2-2h8.500l4 4v9.500l-1.500 1-1.500-1-1.500 1-1.500-1-1.500 1-1.500-1-1.500 1-1.500-1-1.500 1-1-0.800z" fill="url(#ga2)" stroke="#bfa838" stroke-width="0.900"/><path d="M11 0.500v4h4" fill="#fbf6c8" stroke="#bfa838" stroke-width="0.800"/><text x="2.500" y="11.300" font-size="9.500" font-family="Liberation Sans" fill="#3a3000">ab</text></svg>
<div class="a" style="left:658px;top:296px;width:454px;height:19px;background:#ebebeb;border-bottom:1px solid #c8c8c8;"></div>
<div class="a" style="left:884px;top:296px;width:1px;height:20px;background:#c8c8c8;"></div>
<div class="a t" style="left:680.5px;top:300.7px;font-size:11.5px;color:#000;letter-spacing:-0.758px;">SELECT_MODE</div>
<div class="a t" style="left:888.2px;top:300.7px;font-size:11.5px;color:#000;">1</div>
<svg width="17" height="17" style="left:660px;top:298px" shape-rendering="auto"><defs><linearGradient id="gb3" x1="0" y1="0" x2="0" y2="1"><stop offset="0" stop-color="#a8cdf0"/><stop offset="1" stop-color="#4f94d8"/></linearGradient></defs><path d="M0.500 2.500q0-2 2-2h8.500l4 4v9.500l-1.500 1-1.500-1-1.500 1-1.500-1-1.500 1-1.500-1-1.500 1-1.500-1-1.500 1-1-0.800z" fill="url(#gb3)" stroke="#3f7fc4" stroke-width="0.900"/><path d="M11 0.500v4h4" fill="#d8e8f8" stroke="#3f7fc4" stroke-width="0.800"/><rect x="1.500" y="5" width="12.500" height="6.500" fill="#dcebfa"/><text x="2" y="10.800" font-size="6.800" font-weight="bold" font-family="Liberation Sans" fill="#143c78" textLength="11.500" lengthAdjust="spacingAndGlyphs">123</text></svg>
<div class="a" style="left:658px;top:316px;width:454px;height:19px;background:#fff;border-bottom:1px solid #c8c8c8;"></div>
<div class="a" style="left:884px;top:316px;width:1px;height:20px;background:#c8c8c8;"></div>
<div class="a t" style="left:680.5px;top:320.7px;font-size:11.5px;color:#000;letter-spacing:-0.365px;">ALERT TO EMAIL</div>
<div class="a t" style="left:888.2px;top:320.7px;font-size:11.5px;color:#000;letter-spacing:-0.537px;">youremail@yourwebsite.com</div>
<svg width="17" height="17" style="left:660px;top:318px" shape-rendering="auto"><defs><linearGradient id="ga4" x1="0" y1="0" x2="0" y2="1"><stop offset="0" stop-color="#f6eea0"/><stop offset="1" stop-color="#d9c545"/></linearGradient></defs><path d="M0.500 2.500q0-2 2-2h8.500l4 4v9.500l-1.500 1-1.500-1-1.500 1-1.500-1-1.500 1-1.500-1-1.500 1-1.500-1-1.500 1-1-0.800z" fill="url(#ga4)" stroke="#bfa838" stroke-width="0.900"/><path d="M11 0.500v4h4" fill="#fbf6c8" stroke="#bfa838" stroke-width="0.800"/><text x="2.500" y="11.300" font-size="9.500" font-family="Liberation Sans" fill="#3a3000">ab</text></svg>
<div class="a" style="left:658px;top:336px;width:454px;height:19px;background:#ebebeb;border-bottom:1px solid #c8c8c8;"></div>
<div class="a" style="left:884px;top:336px;width:1px;height:20px;background:#c8c8c8;"></div>
<div class="a t" style="left:680.5px;top:340.7px;font-size:11.5px;color:#000;letter-spacing:-0.466px;">ADD SPREAD TO ORDER</div>
<div class="a t" style="left:888.2px;top:340.7px;font-size:11.5px;color:#000;letter-spacing:-0.398px;">false</div>
<svg width="17" height="17" style="left:660px;top:338px" shape-rendering="auto"><defs><linearGradient id="gc5" x1="0" y1="0" x2="0" y2="1"><stop offset="0" stop-color="#9ae89a"/><stop offset="1" stop-color="#30b830"/></linearGradient></defs><path d="M0.500 2.500q0-2 2-2h8.500l4 4v9.500l-1.500 1-1.500-1-1.500 1-1.500-1-1.500 1-1.500-1-1.500 1-1.500-1-1.500 1-1-0.800z" fill="url(#gc5)" stroke="#2a9a2a" stroke-width="0.900"/><path d="M11 0.500v4h4" fill="#d8f8d8" stroke="#2a9a2a" stroke-width="0.800"/><path d="M2.500 10.500l3.500-3.500 3 2h4" stroke="#fff" stroke-width="1.500" fill="none"/></svg>
<div class="a" style="left:658px;top:356px;width:454px;height:19px;background:#3399ff;border-bottom:1px solid #c8c8c8;"></div>
<div class="a" style="left:884px;top:356px;width:1px;height:20px;background:#c8c8c8;"></div>
<div class="a t" style="left:680.5px;top:360.7px;font-size:11.5px;color:#fff;letter-spacing:-0.295px;">LINE WIDTH</div>
<div class="a t" style="left:888.2px;top:360.7px;font-size:11.5px;color:#fff;">4</div>
<svg width="17" height="17" style="left:660px;top:358px" shape-rendering="auto"><defs><linearGradient id="gb6" x1="0" y1="0" x2="0" y2="1"><stop offset="0" stop-color="#a8cdf0"/><stop offset="1" stop-color="#4f94d8"/></linearGradient></defs><path d="M0.500 2.500q0-2 2-2h8.500l4 4v9.500l-1.500 1-1.500-1-1.500 1-1.500-1-1.500 1-1.500-1-1.500 1-1.500-1-1.500 1-1-0.800z" fill="url(#gb6)" stroke="#3f7fc4" stroke-width="0.900"/><path d="M11 0.500v4h4" fill="#d8e8f8" stroke="#3f7fc4" stroke-width="0.800"/><rect x="1.500" y="5" width="12.500" height="6.500" fill="#dcebfa"/><text x="2" y="10.800" font-size="6.800" font-weight="bold" font-family="Liberation Sans" fill="#143c78" textLength="11.500" lengthAdjust="spacingAndGlyphs">123</text></svg>
<div class="a" style="left:658px;top:376px;width:454px;height:19px;background:#ebebeb;border-bottom:1px solid #c8c8c8;"></div>
<div class="a" style="left:884px;top:376px;width:1px;height:20px;background:#c8c8c8;"></div>
<div class="a t" style="left:680.5px;top:380.7px;font-size:11.5px;color:#000;letter-spacing:-0.511px;">MAGIC START</div>
<div class="a t" style="left:888.2px;top:380.7px;font-size:11.5px;color:#000;letter-spacing:-0.446px;">1707</div>
<svg width="17" height="17" style="left:660px;top:378px" shape-rendering="auto"><defs><linearGradient id="gb7" x1="0" y1="0" x2="0" y2="1"><stop offset="0" stop-color="#a8cdf0"/><stop offset="1" stop-color="#4f94d8"/></linearGradient></defs><path d="M0.500 2.500q0-2 2-2h8.500l4 4v9.500l-1.500 1-1.500-1-1.500 1-1.500-1-1.500 1-1.500-1-1.500 1-1.500-1-1.500 1-1-0.800z" fill="url(#gb7)" stroke="#3f7fc4" stroke-width="0.900"/><path d="M11 0.500v4h4" fill="#d8e8f8" stroke="#3f7fc4" stroke-width="0.800"/><rect x="1.500" y="5" width="12.500" height="6.500" fill="#dcebfa"/><text x="2" y="10.800" font-size="6.800" font-weight="bold" font-family="Liberation Sans" fill="#143c78" textLength="11.500" lengthAdjust="spacingAndGlyphs">123</text></svg>
<div class="a" style="left:1122px;top:342px;width:101px;height:19px;border:1px solid #acacac;background:linear-gradient(#f2f2f2,#e3e3e3);"></div><div class="a t" style="left:1162.5px;top:347.2px;font-size:11.5px;color:#000;letter-spacing:-0.646px;">Load</div>
<div class="a" style="left:1122px;top:375px;width:101px;height:19px;border:1px solid #acacac;background:linear-gradient(#f2f2f2,#e3e3e3);"></div><div class="a t" style="left:1161.7px;top:380.2px;font-size:11.5px;color:#000;letter-spacing:-0.478px;">Save</div>
<div class="a" style="left:998px;top:413px;width:71px;height:19px;border:1px solid #3399ff;background:linear-gradient(#f2f2f2,#e3e3e3);"></div><div class="a t" style="left:1028px;top:418.2px;font-size:11.5px;color:#000;letter-spacing:-1.308px;">OK</div>
<div class="a" style="left:1079px;top:413px;width:71px;height:19px;border:1px solid #acacac;background:linear-gradient(#f2f2f2,#e3e3e3);"></div><div class="a t" style="left:1099.6px;top:418.2px;font-size:11.5px;color:#000;letter-spacing:-0.466px;">Cancel</div>
<div class="a" style="left:1160px;top:413px;width:71px;height:19px;border:1px solid #acacac;background:linear-gradient(#f2f2f2,#e3e3e3);"></div><div class="a t" style="left:1182.6px;top:418.2px;font-size:11.5px;color:#000;letter-spacing:-0.568px;">Reset</div>
<svg width="10" height="10" style="left:1232px;top:433px"><g fill="#bcbcbc"><rect x="5" y="0" width="2" height="2"/><rect x="2.500" y="2.500" width="2" height="2"/><rect x="5" y="2.500" width="2" height="2"/><rect x="0" y="5" width="2" height="2"/><rect x="2.500" y="5" width="2" height="2"/><rect x="5" y="5" width="2" height="2"/></g></svg>
<div class="a" style="left:0;top:0;width:1354px;height:75px;background:#f0f0f0;"></div>
<svg width="16" height="16" style="left:3px;top:2px" shape-rendering="auto"><rect x="1.5" y="1.5" width="10" height="8" rx="1" fill="#dfeefc" stroke="#4a8ad0"/><rect x="4.5" y="5.5" width="11" height="9" rx="1" fill="#f4f9ff" stroke="#4a8ad0"/><path d="M6 11l2-3 2 3 2-3 2 3" stroke="#3a78c0" fill="none"/><path d="M3 4h2M6 4h2" stroke="#3a78c0"/></svg>
<div class="a t" style="left:27.1px;top:4px;font-size:12px;color:#a0a0a0;letter-spacing:-0.434px;">File</div>
<div class="a t" style="left:62.8px;top:4px;font-size:12px;color:#a0a0a0;letter-spacing:-0.174px;">View</div>
<div class="a t" style="left:106.2px;top:4px;font-size:12px;color:#a0a0a0;letter-spacing:-0.185px;">Insert</div>
<div class="a t" style="left:153.7px;top:4px;font-size:12px;color:#a0a0a0;letter-spacing:-0.457px;">Charts</div>
<div class="a t" style="left:205.4px;top:4px;font-size:12px;color:#a0a0a0;letter-spacing:0.017px;">Tools</div>
<div class="a t" style="left:252.4px;top:4px;font-size:12px;color:#a0a0a0;letter-spacing:0.120px;">Window</div>
<div class="a t" style="left:314.4px;top:4px;font-size:12px;color:#a0a0a0;letter-spacing:-0.320px;">Help</div>
<div class="a" style="left:1297px;top:1px;width:16px;height:16px;background:#dbe8f6;border:1px solid #a9bfd9;"></div>
<div class="a" style="left:1316px;top:1px;width:16px;height:16px;background:#dbe8f6;border:1px solid #a9bfd9;"></div>
<div class="a" style="left:1335px;top:1px;width:16px;height:16px;background:#dbe8f6;border:1px solid #a9bfd9;"></div>
<div class="a" style="left:1302px;top:12px;width:6px;height:2px;background:#8c98a8;"></div>
<svg width="10" height="10" style="left:1320px;top:6px"><path d="M2.5 2.5V0.5H7.5V5.5H5.5" fill="none" stroke="#8c98a8"/><rect x="0.5" y="3.5" width="5" height="4" fill="none" stroke="#8c98a8"/><path d="M0 3.5H6" stroke="#8c98a8"/><path d="M2 0.5H8" stroke="#8c98a8"/></svg>
<svg width="10" height="10" style="left:1340px;top:6px" shape-rendering="auto"><path d="M1 1L7 7M7 1L1 7" stroke="#8c98a8" stroke-width="1.8"/></svg>
<div class="a" style="left:0;top:20px;width:1354px;height:1px;background:#a0a0a0;"></div>
<div class="a" style="left:0;top:21px;width:1354px;height:1px;background:#fff;"></div>
<div class="a" style="left:0;top:47px;width:811px;height:1px;background:#a0a0a0;"></div>
<div class="a" style="left:0;top:48px;width:811px;height:1px;background:#fff;"></div>
<div class="a" style="left:810px;top:22px;width:1px;height:26px;background:#a0a0a0;"></div>
<svg width="4" height="20" style="left:1px;top:25px"><rect x="0" y="0" width="3" height="1" fill="#a8a8a8"/><rect x="0" y="2" width="3" height="1" fill="#a8a8a8"/><rect x="0" y="4" width="3" height="1" fill="#a8a8a8"/><rect x="0" y="6" width="3" height="1" fill="#a8a8a8"/><rect x="0" y="8" width="3" height="1" fill="#a8a8a8"/><rect x="0" y="10" width="3" height="1" fill="#a8a8a8"/><rect x="0" y="12" width="3" height="1" fill="#a8a8a8"/><rect x="0" y="14" width="3" height="1" fill="#a8a8a8"/><rect x="0" y="16" width="3" height="1" fill="#a8a8a8"/><rect x="0" y="18" width="3" height="1" fill="#a8a8a8"/></svg>
<svg width="4" height="20" style="left:452px;top:25px"><rect x="0" y="0" width="3" height="1" fill="#a8a8a8"/><rect x="0" y="2" width="3" height="1" fill="#a8a8a8"/><rect x="0" y="4" width="3" height="1" fill="#a8a8a8"/><rect x="0" y="6" width="3" height="1" fill="#a8a8a8"/><rect x="0" y="8" width="3" height="1" fill="#a8a8a8"/><rect x="0" y="10" width="3" height="1" fill="#a8a8a8"/><rect x="0" y="12" width="3" height="1" fill="#a8a8a8"/><rect x="0" y="14" width="3" height="1" fill="#a8a8a8"/><rect x="0" y="16" width="3" height="1" fill="#a8a8a8"/><rect x="0" y="18" width="3" height="1" fill="#a8a8a8"/></svg>
<svg width="4" height="20" style="left:1px;top:52px"><rect x="0" y="0" width="3" height="1" fill="#a8a8a8"/><rect x="0" y="2" width="3" height="1" fill="#a8a8a8"/><rect x="0" y="4" width="3" height="1" fill="#a8a8a8"/><rect x="0" y="6" width="3" height="1" fill="#a8a8a8"/><rect x="0" y="8" width="3" height="1" fill="#a8a8a8"/><rect x="0" y="10" width="3" height="1" fill="#a8a8a8"/><rect x="0" y="12" width="3" height="1" fill="#a8a8a8"/><rect x="0" y="14" width="3" height="1" fill="#a8a8a8"/><rect x="0" y="16" width="3" height="1" fill="#a8a8a8"/><rect x="0" y="18" width="3" height="1" fill="#a8a8a8"/></svg>
<svg width="4" height="20" style="left:305px;top:52px"><rect x="0" y="0" width="3" height="1" fill="#a8a8a8"/><rect x="0" y="2" width="3" height="1" fill="#a8a8a8"/><rect x="0" y="4" width="3" height="1" fill="#a8a8a8"/><rect x="0" y="6" width="3" height="1" fill="#a8a8a8"/><rect x="0" y="8" width="3" height="1" fill="#a8a8a8"/><rect x="0" y="10" width="3" height="1" fill="#a8a8a8"/><rect x="0" y="12" width="3" height="1" fill="#a8a8a8"/><rect x="0" y="14" width="3" height="1" fill="#a8a8a8"/><rect x="0" y="16" width="3" height="1" fill="#a8a8a8"/><rect x="0" y="18" width="3" height="1" fill="#a8a8a8"/></svg>
<div class="a" style="left:82px;top:24px;width:1px;height:21px;background:#a0a0a0;"></div><div class="a" style="left:83px;top:24px;width:1px;height:21px;background:#fff;"></div>
<div class="a" style="left:228px;top:24px;width:1px;height:21px;background:#a0a0a0;"></div><div class="a" style="left:229px;top:24px;width:1px;height:21px;background:#fff;"></div>
<div class="a" style="left:448px;top:24px;width:1px;height:21px;background:#a0a0a0;"></div><div class="a" style="left:449px;top:24px;width:1px;height:21px;background:#fff;"></div>
<div class="a" style="left:543px;top:24px;width:1px;height:21px;background:#a0a0a0;"></div><div class="a" style="left:544px;top:24px;width:1px;height:21px;background:#fff;"></div>
<div class="a" style="left:633px;top:24px;width:1px;height:21px;background:#a0a0a0;"></div><div class="a" style="left:634px;top:24px;width:1px;height:21px;background:#fff;"></div>
<div class="a" style="left:695px;top:24px;width:1px;height:21px;background:#a0a0a0;"></div><div class="a" style="left:696px;top:24px;width:1px;height:21px;background:#fff;"></div>
<div class="a" style="left:64px;top:51px;width:1px;height:22px;background:#a0a0a0;"></div><div class="a" style="left:65px;top:51px;width:1px;height:22px;background:#fff;"></div>
<div class="a" style="left:301px;top:49px;width:1px;height:25px;background:#a0a0a0;"></div><div class="a" style="left:302px;top:49px;width:1px;height:25px;background:#fff;"></div>
<div class="a" style="left:562px;top:49px;width:1px;height:25px;background:#a0a0a0;"></div><div class="a" style="left:563px;top:49px;width:1px;height:25px;background:#fff;"></div>
<svg width="18" height="16" style="left:10px;top:27px" shape-rendering="auto"><rect x="0.5" y="0.5" width="12" height="9" rx="1" fill="#e8f1fb" stroke="#3f7fca"/><path d="M3 2.5v5M2 3.5l1-1 1 1M5 6.5h5" stroke="#6a8db8" fill="none"/><path d="M9.1 4.2h3.5999999999999996v3.5999999999999996h3.5999999999999996v3.5999999999999996h-3.5999999999999996v3.5999999999999996h-3.5999999999999996v-3.5999999999999996h-3.5999999999999996v-3.5999999999999996h3.5999999999999996z" fill="#22c522" stroke="#0b7a0b" stroke-width="0.8"/></svg>
<svg width="6" height="4" style="left:32px;top:34px"><path d="M0 0H5L2.5 3Z" fill="#000"/></svg>
<svg width="18" height="16" style="left:47px;top:27px" shape-rendering="auto"><rect x="3.5" y="5.5" width="13" height="9" rx="1" fill="#e8f1fb" stroke="#3f7fca"/><rect x="0.5" y="0.5" width="13" height="10" rx="1" fill="#eef5fd" stroke="#3f7fca"/><path d="M3 2.5v5M2 3.5l1-1 1 1M5 6.5h6M10 5.5l1 1-1 1" stroke="#6a8db8" fill="none"/><path d="M6 12.5h8" stroke="#6a8db8"/></svg>
<svg width="6" height="4" style="left:69px;top:34px"><path d="M0 0H5L2.5 3Z" fill="#000"/></svg>
<svg width="17" height="16" style="left:91px;top:27px" shape-rendering="auto"><rect x="0.5" y="0.5" width="15" height="14" rx="1.5" fill="#f6fbff" stroke="#5a9ae0"/><path d="M9 4h5M9 7h5M3 11h5" stroke="#b8cce4"/><path d="M5.5 2l3 3h-2v3h-2v-3h-2z" fill="#22b022"/><path d="M9.5 13l-3-3h2v-3h2v3h2z" fill="#e04818"/></svg>
<svg width="16" height="16" style="left:120px;top:27px" shape-rendering="auto"><circle cx="7.5" cy="7.5" r="4.8" fill="none" stroke="#606060" stroke-width="1.4"/><path d="M7.5 0v5M7.5 10v5M0 7.5h5M10 7.5h5" stroke="#606060" stroke-width="1.4"/></svg>
<svg width="19" height="18" style="left:146px;top:26px" shape-rendering="auto"><path d="M0.5 3.5v-2h4l1 1h5v4h-10z" fill="#f5d878" stroke="#c9a238"/><rect x="0.5" y="4.5" width="10" height="6" fill="#fbe9a0" stroke="#c9a238"/><path d="M4.5 11v5" stroke="#606060" stroke-dasharray="1 1"/><path d="M12 6l1.8 3.6 4 .6-2.9 2.8.7 4-3.6-1.9-3.6 1.9.7-4-2.9-2.8 4-.6z" fill="#f8d040" stroke="#b88a18" stroke-width="0.9"/></svg>
<svg width="17" height="14" style="left:175px;top:28px" shape-rendering="auto"><rect x="0.5" y="0.5" width="15" height="12" rx="1.5" fill="#f4f9ff" stroke="#2f6fc0" stroke-width="1.4"/><rect x="1.5" y="1.5" width="2.5" height="10" fill="#2f5f9f"/><path d="M6 3.5h8M6 6h8M6 8.5h8" stroke="#b0c4de"/><rect x="5" y="3" width="1.2" height="1.2" fill="#e02020"/><rect x="5" y="5.5" width="1.2" height="1.2" fill="#e02020"/><rect x="5" y="8" width="1.2" height="1.2" fill="#e02020"/></svg>
<svg width="20" height="18" style="left:203px;top:27px" shape-rendering="auto"><rect x="0.5" y="0.5" width="12" height="12" fill="#f4efe2" stroke="#b0a890"/><path d="M3 2v6M2 3l1-1 1 1M4 4.5h6M9 3.5l1 1-1 1" stroke="#5a7aa8" fill="none"/><circle cx="8" cy="8" r="4.3" fill="#cfe4f8" fill-opacity="0.85" stroke="#5a9ae0" stroke-width="1.3"/><path d="M11.2 11.2l5 5" stroke="#c8961e" stroke-width="2.2" stroke-linecap="round"/></svg>
<svg width="18" height="17" style="left:238px;top:27px" shape-rendering="auto"><path d="M0.5 0.5h7l3 3v9h-10z" fill="#fff" stroke="#909090"/><path d="M7.5 0.5v3h3" fill="none" stroke="#909090"/><path d="M2 4h4M2 6h6M2 8h6M2 10h4" stroke="#a0a0a0"/><path d="M8.95 6.8h3.4499999999999997v3.4499999999999997h3.4499999999999997v3.4499999999999997h-3.4499999999999997v3.4499999999999997h-3.4499999999999997v-3.4499999999999997h-3.4499999999999997v-3.4499999999999997h3.4499999999999997z" fill="#22c522" stroke="#0b7a0b" stroke-width="0.8"/></svg>
<div class="a t" style="left:257px;top:28px;font-size:12px;color:#000;letter-spacing:-0.15px;">New Order</div>
<svg width="18" height="17" style="left:326px;top:27px" shape-rendering="auto"><path d="M6 1l10 7-5 7-10-5z" fill="#e8b83c" stroke="#a87818"/><path d="M1 10l0 2 10 5 0-2z" fill="#c89628" stroke="#a87818" stroke-width="0.6"/><path d="M6 1l-5 9 10 5 5-7" fill="none" stroke="#a87818" stroke-width="0.6"/><path d="M6.5 3l8 5.5" stroke="#f8e090" stroke-width="1.2"/></svg>
<div class="a" style="left:350px;top:23px;width:96px;height:21px;background:#f6f6f6;border:1px solid #c8c8c8;"></div>
<svg width="18" height="19" style="left:353px;top:26px" shape-rendering="auto"><ellipse cx="8" cy="6" rx="7.5" ry="3" fill="#4a8ad0"/><path d="M3.5 5.5c0-6 9-6 9 0z" fill="#5a9ae0"/><path d="M1.5 8l2 8c3 2 7 2 9 0l2-8c-4 2.5-9 2.5-13 0z" fill="#f0c840" stroke="#c09820" stroke-width="0.6"/><circle cx="12" cy="13.5" r="4" fill="#28b828" stroke="#fff" stroke-width="0.8"/><path d="M10.8 11.5l3.2 2-3.2 2z" fill="#fff"/></svg>
<div class="a t" style="left:374px;top:28px;font-size:12px;color:#000;letter-spacing:0.1px;">AutoTrading</div>
<div class="a" style="left:458px;top:23px;width:23px;height:20px;background:#f8f8f8;border:1px solid #c8c8c8;border-right-color:#fff;border-bottom-color:#fff;"></div>
<svg width="15" height="16" style="left:463px;top:28px" shape-rendering="crispEdges"><path d="M3.5 1v14M1.5 3l2-2 2 2M0 12.5h14M12 10.5l2 2-2 2" stroke="#505050" fill="none"/><path d="M8.5 2v8M8.5 3.5h2M6.500 9.500h2" stroke="#209020" stroke-width="1.4" fill="none"/></svg>
<svg width="15" height="16" style="left:491px;top:28px" shape-rendering="crispEdges"><path d="M3.5 1v14M1.5 3l2-2 2 2M0 12.5h14M12 10.5l2 2-2 2" stroke="#505050" fill="none"/><path d="M8.5 0v11" stroke="#209020"/><rect x="6.5" y="2.500" width="4" height="6" fill="#30d030" stroke="#209020"/></svg>
<svg width="15" height="16" style="left:519px;top:28px" shape-rendering="crispEdges"><path d="M3.5 1v14M1.5 3l2-2 2 2M0 12.5h14M12 10.5l2 2-2 2" stroke="#505050" fill="none"/><path d="M3.5 9c2-5 5-7 10-2" stroke="#209020" stroke-width="1.2" fill="none" shape-rendering="auto"/></svg>
<svg width="18" height="18" style="left:551px;top:26px" shape-rendering="auto"><circle cx="7" cy="7" r="5.6" fill="#e4f0fc" stroke="#2f7fe0" stroke-width="1.6"/><path d="M7 4v6M4 7h6" stroke="#2f7fe0" stroke-width="1.8"/><path d="M11.3 11.3l4.500 4.500" stroke="#c8a028" stroke-width="2.4" stroke-linecap="round"/></svg>
<svg width="18" height="18" style="left:579px;top:26px" shape-rendering="auto"><circle cx="7" cy="7" r="5.6" fill="#f4f4f4" stroke="#b8b8b8" stroke-width="1.6"/><path d="M4 7h6" stroke="#b0b0b0" stroke-width="1.8"/><path d="M11.3 11.3l4.500 4.500" stroke="#b8b8b8" stroke-width="2.4" stroke-linecap="round"/></svg>
<svg width="17" height="16" style="left:608px;top:27px" shape-rendering="crispEdges"><rect x="0" y="0" width="7.500" height="7.500" fill="#50a828"/><rect x="8.500" y="0" width="7.500" height="7.500" fill="#2858c8"/><rect x="0" y="8.500" width="7.500" height="7.500" fill="#2858c8"/><rect x="8.500" y="8.500" width="7.500" height="7.500" fill="#50a828"/><g fill="#fff" fill-opacity="0.85"><rect x="1.500" y="3" width="4.500" height="3"/><rect x="10" y="3" width="4.500" height="3"/><rect x="1.500" y="11.500" width="4.500" height="3"/><rect x="10" y="11.500" width="4.500" height="3"/></g></svg>
<div class="a" style="left:638px;top:23px;width:23px;height:20px;background:#f8f8f8;border:1px solid #c8c8c8;border-right-color:#fff;border-bottom-color:#fff;"></div>
<div class="a" style="left:666px;top:23px;width:23px;height:20px;background:#f8f8f8;border:1px solid #c8c8c8;border-right-color:#fff;border-bottom-color:#fff;"></div>
<svg width="15" height="16" style="left:643px;top:28px" shape-rendering="crispEdges"><path d="M3.5 1v14M1.5 3l2-2 2 2M0 12.5h14M12 10.5l2 2-2 2" stroke="#505050" fill="none"/><path d="M7.5 3.500l4 3-4 3z" fill="#40d040" stroke="#209020"/></svg>
<svg width="15" height="16" style="left:671px;top:28px" shape-rendering="crispEdges"><path d="M3.5 1v14M1.5 3l2-2 2 2M0 12.5h14M12 10.5l2 2-2 2" stroke="#505050" fill="none"/><path d="M8.5 1v10" stroke="#2060c0" stroke-width="1"/><path d="M14 6.500h-4M12 4.500l-2 2 2 2" stroke="#d03010" stroke-width="1.2" fill="none"/></svg>
<svg width="18" height="19" style="left:705px;top:27px" shape-rendering="auto"><path d="M3.500 0.500h6l2 2v9h-8z" fill="#fff" stroke="#909090"/><path d="M0.500 2.500h6l2 2v8h-8z" fill="#f4f4f4" stroke="#909090"/><text x="2" y="10" font-size="7" font-style="italic" font-family="Liberation Serif" fill="#404040">f</text><path d="M8.95 6.8h3.4499999999999997v3.4499999999999997h3.4499999999999997v3.4499999999999997h-3.4499999999999997v3.4499999999999997h-3.4499999999999997v-3.4499999999999997h-3.4499999999999997v-3.4499999999999997h3.4499999999999997z" fill="#22c522" stroke="#0b7a0b" stroke-width="0.8"/></svg>
<svg width="6" height="4" style="left:725px;top:34px"><path d="M0 0H5L2.5 3Z" fill="#000"/></svg>
<svg width="17" height="17" style="left:741px;top:27px" shape-rendering="auto"><circle cx="8" cy="8" r="7" fill="#f4f8fc" stroke="#1f5fc0" stroke-width="2"/><path d="M8 3.500v4.500h3.500" stroke="#404040" stroke-width="1.2" fill="none"/><g fill="#606060"><rect x="7.500" y="2" width="1" height="1"/><rect x="7.500" y="13" width="1" height="1"/><rect x="2" y="7.500" width="1" height="1"/><rect x="13" y="7.500" width="1" height="1"/></g></svg>
<svg width="6" height="4" style="left:762px;top:34px"><path d="M0 0H5L2.5 3Z" fill="#000"/></svg>
<svg width="17" height="15" style="left:778px;top:28px" shape-rendering="auto"><rect x="0.500" y="0.500" width="15" height="13" rx="1" fill="#fff" stroke="#3f7fca" stroke-width="1.3"/><rect x="1" y="1" width="14" height="2" fill="#3f7fca"/><path d="M1 7.500h14" stroke="#9fbfe4"/><path d="M2.500 6l3-1.500 3 .5 2-1.500 3 .5" stroke="#c02818" fill="none"/><path d="M2.500 11.500l2.500-1 2 1 3-2.500 3 2" stroke="#209020" fill="none"/></svg>
<svg width="6" height="4" style="left:799px;top:34px"><path d="M0 0H5L2.5 3Z" fill="#000"/></svg>
<div class="a" style="left:1150px;top:22px;width:171px;height:22px;background:#fff;border:1px solid #a8a8a8;"></div>
<svg width="16" height="14" style="left:1304px;top:27px" shape-rendering="auto"><circle cx="9.500" cy="5" r="3.800" fill="#fff" stroke="#2f6fd0" stroke-width="1.500"/><path d="M6.800 7.800l-4.500 4.500" stroke="#2f6fd0" stroke-width="2.200" stroke-linecap="round"/></svg>
<div class="a" style="left:1322px;top:22px;width:29px;height:22px;background:#e6e6e6;border:1px solid #b8b8b8;"></div>
<svg width="17" height="16" style="left:1329px;top:27px" shape-rendering="auto"><path d="M0.500 1.500q0-1 1-1h13q1 0 1 1v9q0 1-1 1h-9l1 3.500-4-3.500h-1q-1 0-1-1z" fill="#6a86b6"/><text x="5" y="10" font-size="10" font-weight="bold" font-family="Liberation Sans" fill="#fff">5</text></svg>
<div class="a" style="left:7px;top:50px;width:24px;height:21px;background:#f8f8f8;border:1px solid #c8c8c8;border-right-color:#fff;border-bottom-color:#fff;"></div>
<svg width="10" height="15" style="left:15px;top:55px" shape-rendering="auto"><path d="M0.500 0.500v11.500l2.800-2.600 2.200 4.800 1.800-.8-2.200-4.700 3.800-.2z" fill="#505050"/></svg>
<svg width="16" height="16" style="left:40px;top:55px" shape-rendering="crispEdges"><path d="M7.500 0v6M7.500 9v6M0 7.500h6M9 7.500h6" stroke="#505050"/></svg>
<svg width="2" height="14" style="left:81px;top:56px" shape-rendering="crispEdges"><path d="M0.500 0v13" stroke="#505050"/></svg>
<svg width="13" height="2" style="left:104px;top:62px" shape-rendering="crispEdges"><path d="M0 0.500h12" stroke="#505050"/></svg>
<svg width="14" height="14" style="left:131px;top:56px" shape-rendering="auto"><path d="M0.500 12.500l12.500-11.500" stroke="#505050" stroke-width="1.100"/></svg>
<svg width="17" height="17" style="left:158px;top:54px" shape-rendering="auto"><path d="M0.500 9.500l11-6M2.500 13.500l11-6M3 7l2 8M6 5l2 8M9 4l2 8" stroke="#505050" stroke-width="1" fill="none"/><text x="11" y="16" font-size="7" font-weight="bold" font-family="Liberation Sans" fill="#404040">E</text></svg>
<svg width="16" height="16" style="left:187px;top:55px" shape-rendering="crispEdges"><path d="M0 0.500h14M0 3.500h14M0 6.500h14M0 9.500h14M0 12.500h9" stroke="#505050" stroke-dasharray="1 1"/><text x="10" y="15.500" font-size="7" font-weight="bold" font-family="Liberation Sans" fill="#404040" shape-rendering="auto">F</text></svg>
<div class="a t" style="left:218px;top:57px;font-size:11.5px;color:#505050;font-weight:bold;">A</div>
<svg width="14" height="15" style="left:243px;top:55px" shape-rendering="crispEdges"><rect x="1.500" y="1.500" width="11" height="12" fill="none" stroke="#505050" stroke-dasharray="1 1"/><rect x="0" y="0" width="2" height="2" fill="#505050"/><text x="3.500" y="12" font-size="11" font-weight="bold" font-family="Liberation Sans" fill="#505050" shape-rendering="auto">T</text></svg>
<svg width="16" height="14" style="left:271px;top:56px" shape-rendering="auto"><path d="M4 0l3 3.500h-6z M11.500 13l-3-3.500h6z" fill="#505050"/><path d="M3.500 9l2 2.500 3.500-6" stroke="#505050" stroke-width="1.400" fill="none"/><path d="M1 6.500l3 3 3-3z" fill="#505050" opacity="0"/><path d="M9 5l2.500 3" stroke="#505050" stroke-width="1.300"/></svg>
<svg width="6" height="4" style="left:290px;top:61px"><path d="M0 0H5L2.5 3Z" fill="#000"/></svg>
<div class="a t" style="left:316.5px;top:57.5px;font-size:9.8px;color:#404040;letter-spacing:-0.457px;">M1</div>
<div class="a t" style="left:344.8px;top:57.5px;font-size:9.8px;color:#404040;letter-spacing:-0.557px;">M5</div>
<div class="a t" style="left:370.8px;top:57.5px;font-size:9.8px;color:#404040;letter-spacing:-0.555px;">M15</div>
<div class="a t" style="left:398.4px;top:57.5px;font-size:9.8px;color:#404040;letter-spacing:-0.422px;">M30</div>
<div class="a t" style="left:456px;top:57.5px;font-size:9.8px;color:#404040;letter-spacing:0.236px;">H4</div>
<div class="a t" style="left:485.5px;top:57.5px;font-size:9.8px;color:#404040;letter-spacing:-0.314px;">D1</div>
<div class="a t" style="left:512.7px;top:57.5px;font-size:9.8px;color:#404040;letter-spacing:0.050px;">W1</div>
<div class="a t" style="left:539.4px;top:57.5px;font-size:9.8px;color:#404040;letter-spacing:-0.321px;">MN</div>
<div class="a" style="left:423px;top:50px;width:23px;height:21px;background:#f8f8f8;border:1px solid #c8c8c8;border-right-color:#fff;border-bottom-color:#fff;"></div>
<div class="a t" style="left:429.8px;top:57.5px;font-size:9.8px;color:#404040;letter-spacing:-0.764px;">H1</div>
<div class="a" style="left:0;top:660px;width:1354px;height:26px;background:#f0f0f0;"></div>
<div class="a" style="left:0;top:660px;width:1354px;height:2px;background:#fff;"></div>
<div class="a" style="left:1px;top:662px;width:1353px;height:1px;background:#303030;"></div>
<div class="a" style="left:0;top:663px;width:2px;height:18px;background:#404040;"></div>
<div class="a" style="left:2px;top:681px;width:1352px;height:1px;background:#fafafa;"></div>
<div class="a t" style="left:16.5px;top:666px;font-size:11.5px;color:#606060;letter-spacing:-0.137px;">CADCHF,H1</div>
<div class="a t" style="left:104.5px;top:666px;font-size:11.5px;color:#606060;letter-spacing:-0.607px;">GBPUSD,H1</div>
<div class="a t" style="left:188.2px;top:666px;font-size:11.5px;color:#606060;letter-spacing:-0.060px;">CADCHF,H1</div>
<div class="a t" style="left:276.2px;top:666px;font-size:11.5px;color:#606060;letter-spacing:-0.607px;">GBPUSD,H1</div>
<div class="a t" style="left:359.1px;top:666px;font-size:11.5px;color:#606060;letter-spacing:0.076px;">CADCHF,M5</div>
<div class="a t" style="left:448.1px;top:666px;font-size:11.5px;color:#606060;letter-spacing:-0.607px;">GBPUSD,H1</div>
<div class="a t" style="left:532.4px;top:666px;font-size:11.5px;color:#606060;letter-spacing:-0.718px;">EURUSD,H1</div>
<div class="a t" style="left:616.5px;top:666px;font-size:11.5px;color:#606060;letter-spacing:-0.607px;">GBPUSD,H1</div>
<div class="a" style="left:93px;top:665px;width:1px;height:13px;background:#707070;"></div>
<div class="a" style="left:177px;top:665px;width:1px;height:13px;background:#707070;"></div>
<div class="a" style="left:265px;top:665px;width:1px;height:13px;background:#707070;"></div>
<div class="a" style="left:349px;top:665px;width:1px;height:13px;background:#707070;"></div>
<div class="a" style="left:437px;top:665px;width:1px;height:13px;background:#707070;"></div>
<div class="a" style="left:521px;top:665px;width:1px;height:13px;background:#707070;"></div>
<div class="a" style="left:605px;top:665px;width:1px;height:13px;background:#707070;"></div>
<div class="a" style="left:689px;top:660px;width:82px;height:20px;background:#fff;border:1px solid #000;border-top:none;border-right-width:2px;"></div>
<div class="a t" style="left:700.6px;top:666px;font-size:11.5px;color:#000;letter-spacing:-0.607px;">GBPUSD,H1</div>
<svg width="6" height="8" style="left:1321px;top:667px"><path d="M4 0L0 3.500L4 7Z" fill="#909090"/></svg>
<svg width="6" height="8" style="left:1340px;top:667px"><path d="M0 0L4 3.500L0 7Z" fill="#909090"/></svg>
</body></html>
